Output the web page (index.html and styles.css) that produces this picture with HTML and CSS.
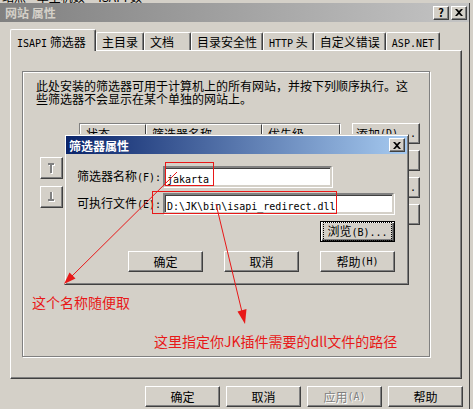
FILE: index.html
```html
<!DOCTYPE html>
<html lang="zh-CN">
<head>
    <meta charset="UTF-8">
    <title>网站 属性</title>
    <link rel="stylesheet" href="styles.css">
</head>
<body>
    <!-- clipped row of the window behind -->
    <div class="strip"><span>站点    单主机数     ISAPI 数</span></div>

    <div class="window">
        <div class="titlebar">
            <span class="caption">网站 属性</span>
            <div class="caption-btns">
                <span class="tbtn help">?</span>
                <span class="tbtn">
                    <svg width="8" height="7" viewBox="0 0 8 7"><path d="M0 0h2l2 2 2-2h2L5 3.5 8 7H6L4 5 2 7H0l3-3.5z" fill="#000"/></svg>
                </span>
            </div>
        </div>

        <!-- Tabs -->
        <div class="tabs">
            <div class="tab active"><span class="en">ISAPI</span> 筛选器</div>
            <div class="tab">主目录</div>
            <div class="tab">文档</div>
            <div class="tab">目录安全性</div>
            <div class="tab"><span class="en">HTTP</span> 头</div>
            <div class="tab">自定义错误</div>
            <div class="tab"><span class="en">ASP.NET</span></div>
        </div>

        <div class="panel">
            <div class="group">
                <p class="intro">此处安装的筛选器可用于计算机上的所有网站，并按下列顺序执行。这<br>些筛选器不会显示在某个单独的网站上。</p>
                <div class="filters">
                    <div class="updown">
                        <span class="btn arrow">
                            <svg width="9" height="11" viewBox="0 0 9 11">
                                <path d="M2 1h6v2H6v8H4V3H2z" fill="#fff"/>
                                <path d="M1 0h6v2H5v8H3V2H1z" fill="#808080"/>
                            </svg>
                        </span>
                        <span class="btn arrow">
                            <svg width="9" height="11" viewBox="0 0 9 11">
                                <path d="M2 10h6V8H6V0H4v8H2z" fill="#fff"/>
                                <path d="M1 9h6V7H5V-1H3v8H1z" fill="#808080"/>
                            </svg>
                        </span>
                    </div>
                    <div class="list">
                        <div class="list-head">
                            <span class="col c1">状态</span>
                            <span class="col c2">筛选器名称</span>
                            <span class="col c3">优先级</span>
                        </div>
                    </div>
                    <div class="side-btns">
                        <span class="btn">添加<span class="en">(D)...</span></span>
                        <span class="btn">删除<span class="en">(R)</span></span>
                        <span class="btn">编辑<span class="en">(E)...</span></span>
                        <span class="btn">禁用<span class="en">(S)</span></span>
                    </div>
                </div>
            </div>
        </div>

        <div class="footer">
            <span class="btn">确定</span>
            <span class="btn">取消</span>
            <span class="btn disabled">应用<span class="en">(A)</span></span>
            <span class="btn">帮助</span>
        </div>
    </div>

    <!-- Filter properties dialog -->
    <div class="dialog">
        <div class="dlg-title">
            <span>筛选器属性</span>
            <span class="tbtn">
                <svg width="8" height="7" viewBox="0 0 8 7"><path d="M0 0h2l2 2 2-2h2L5 3.5 8 7H6L4 5 2 7H0l3-3.5z" fill="#000"/></svg>
            </span>
        </div>
        <div class="dlg-body">
            <div class="row">
                <label>筛选器名称<span class="en"><u>(F)</u>:</span></label>
                <span class="field short"><span class="en">jakarta</span></span>
            </div>
            <div class="row">
                <label>可执行文件<span class="en"><u>(E)</u>:</span></label>
                <span class="field long"><span class="en">D:\JK\bin\isapi_redirect.dll</span></span>
            </div>
            <span class="btn default"><span class="focus">浏览<span class="en">(B)...</span></span></span>
            <div class="dlg-btns">
                <span class="btn">确定</span>
                <span class="btn">取消</span>
                <span class="btn">帮助<span class="en">(H)</span></span>
            </div>
        </div>
    </div>

    <!-- red annotations drawn over the screenshot -->
    <svg class="marks" width="473" height="409" viewBox="0 0 473 409">
        <rect x="165.5" y="162.5" width="48" height="23" fill="none" stroke="#e81818"/>
        <rect x="152.5" y="191.5" width="184" height="22" fill="none" stroke="#e81818"/>
        <line x1="177" y1="172" x2="70" y2="278" stroke="#e81818"/>
        <polygon points="64,284 75.5,278.5 69.5,272.5" fill="#e81818"/>
        <line x1="216" y1="204" x2="242" y2="312" stroke="#e81818"/>
        <polygon points="245,324 246.5,309 237.5,311.5" fill="#e81818"/>
    </svg>
    <div class="note note-name">这个名称随便取</div>
    <div class="note note-path">这里指定你JK插件需要的dll文件的路径</div>
</body>
</html>
```

FILE: styles.css
```css
/* General */
* {
    box-sizing: border-box;
}
body {
    margin: 0;
    width: 473px;
    height: 409px;
    overflow: hidden;
    position: relative;
    background-color: #d4d0c8;
    font-family: "Noto Sans CJK SC", sans-serif;
    font-size: 12px;
    line-height: 13px;
    color: #000;
}
.en {
    font-family: "DejaVu Sans Mono", monospace;
    font-size: 10px;
}
u {
    text-decoration: none;
}

.strip {
    height: 3px;
    overflow: hidden;
    line-height: 12px;
}
.strip span {
    display: block;
    margin-top: -9px;
    padding-left: 2px;
    white-space: pre;
}

/* Main window */
.window {
    width: 470px;
    height: 406px;
    border-right: 1px solid #404040;
}
.titlebar {
    height: 19px;
    display: flex;
    align-items: center;
    justify-content: space-between;
    padding: 0 2px 0 5px;
    background: linear-gradient(to right, #808080, #c4c4c4);
}
.caption {
    color: #d4d0c8;
    font-weight: bold;
}
.caption-btns {
    display: flex;
    gap: 2px;
}
.tbtn {
    width: 16px;
    height: 14px;
    display: flex;
    align-items: center;
    justify-content: center;
    background-color: #d4d0c8;
    border: 1px solid;
    border-color: #fff #404040 #404040 #fff;
    box-shadow: inset -1px -1px #808080;
    font-weight: bold;
    font-size: 11px;
    color: #000;
}

/* Tabs */
.tabs {
    height: 28px;
    display: flex;
    align-items: flex-end;
    padding-left: 10px;
}
.tab {
    height: 18px;
    min-width: 47px;
    padding: 2px 5px 0 5px;
    border: 1px solid #fff;
    border-right-color: #404040;
    border-bottom: none;
    border-radius: 2px 2px 0 0;
    box-shadow: inset -1px 0 #808080;
    white-space: nowrap;
}
.tab.active {
    height: 22px;
    min-width: 86px;
    margin-bottom: -1px;
    padding: 5px 7px 0 6px;
    position: relative;
    z-index: 1;
    background-color: #d4d0c8;
}

/* Tab page */
.panel {
    margin-left: 10px;
    width: 452px;
    height: 329px;
    padding: 20px 0 0 11px;
    border: 1px solid #fff;
    border-right-color: #404040;
    border-bottom-color: #404040;
    box-shadow: inset -1px -1px #808080;
}
.group {
    width: 408px;
    height: 286px;
    padding: 7px 0 0 13px;
    border: 1px solid #808080;
    box-shadow: inset 1px 1px #fff, 1px 1px #fff;
}
.intro {
    margin: 0;
}
.filters {
    display: flex;
    margin-top: 18px;
}
.updown {
    display: flex;
    flex-direction: column;
    gap: 7px;
    margin: 34px 16px 0 4px;
}
.list {
    width: 262px;
    height: 130px;
    background-color: #fff;
    border: 1px solid;
    border-color: #808080 #fff #fff #808080;
}
.list-head {
    display: flex;
    height: 18px;
}
.col {
    padding: 2px 0 0 5px;
    background-color: #d4d0c8;
    border: 1px solid;
    border-color: #fff #404040 #404040 #fff;
}
.c1 { width: 66px; }
.c2 { width: 116px; }
.c3 { width: 78px; }
.side-btns {
    display: flex;
    flex-direction: column;
    gap: 6px;
    margin-left: 11px;
}
.side-btns .btn {
    width: 68px;
}

/* Buttons */
.btn {
    width: 75px;
    height: 21px;
    display: flex;
    align-items: center;
    justify-content: center;
    white-space: nowrap;
    background-color: #d4d0c8;
    border: 1px solid;
    border-color: #fff #404040 #404040 #fff;
    box-shadow: inset -1px -1px #808080;
}
.btn.arrow {
    width: 23px;
    height: 22px;
}
.btn.disabled {
    color: #808080;
    text-shadow: 1px 1px #fff;
}
.btn.default {
    align-self: flex-end;
    border-color: #000;
    box-shadow: inset 1px 1px #fff, inset -1px -1px #404040, inset -2px -2px #808080;
}
.focus {
    padding: 1px 3px;
    outline: 1px dotted #000;
}

.footer {
    display: flex;
    justify-content: flex-end;
    gap: 6px;
    margin-top: 7px;
    padding-right: 6px;
}

/* Filter properties dialog */
.dialog {
    position: absolute;
    left: 64px;
    top: 134px;
    width: 345px;
    height: 151px;
    padding: 1px;
    background-color: #d4d0c8;
    border: 1px solid;
    border-color: #d4d0c8 #404040 #404040 #d4d0c8;
    box-shadow: inset 1px 1px #fff, inset -1px -1px #808080;
}
.dlg-title {
    height: 18px;
    display: flex;
    align-items: center;
    justify-content: space-between;
    padding: 0 2px 0 3px;
    background: linear-gradient(to right, #0a246a, #a6caf0);
    color: #fff;
    font-weight: bold;
}
.dlg-body {
    display: flex;
    flex-direction: column;
    padding: 12px 12px 0 11px;
}
.row {
    display: flex;
    align-items: center;
    margin-bottom: 6px;
}
.row label {
    width: 86px;
}
.field {
    height: 21px;
    padding: 3px 0 0 2px;
    background-color: #fff;
    border: 2px solid;
    border-color: #808080 #d4d0c8 #d4d0c8 #808080;
    box-shadow: inset 1px 1px #404040, 1px 1px #fff;
    white-space: nowrap;
}
.field .en {
    font-size: 10px;
}
.field.short { width: 169px; }
.field.long { width: 231px; }
.dlg-body .btn.default {
    margin-top: 1px;
}
.dlg-btns {
    display: flex;
    justify-content: flex-end;
    gap: 21px;
    margin-top: 9px;
}

/* Red annotations */
.marks {
    position: absolute;
    left: 0;
    top: 0;
}
.note {
    position: absolute;
    color: #e81818;
    font-size: 14px;
    line-height: 16px;
    white-space: nowrap;
}
.note-name {
    left: 32px;
    top: 294px;
}
.note-path {
    left: 154px;
    top: 333px;
}
```
